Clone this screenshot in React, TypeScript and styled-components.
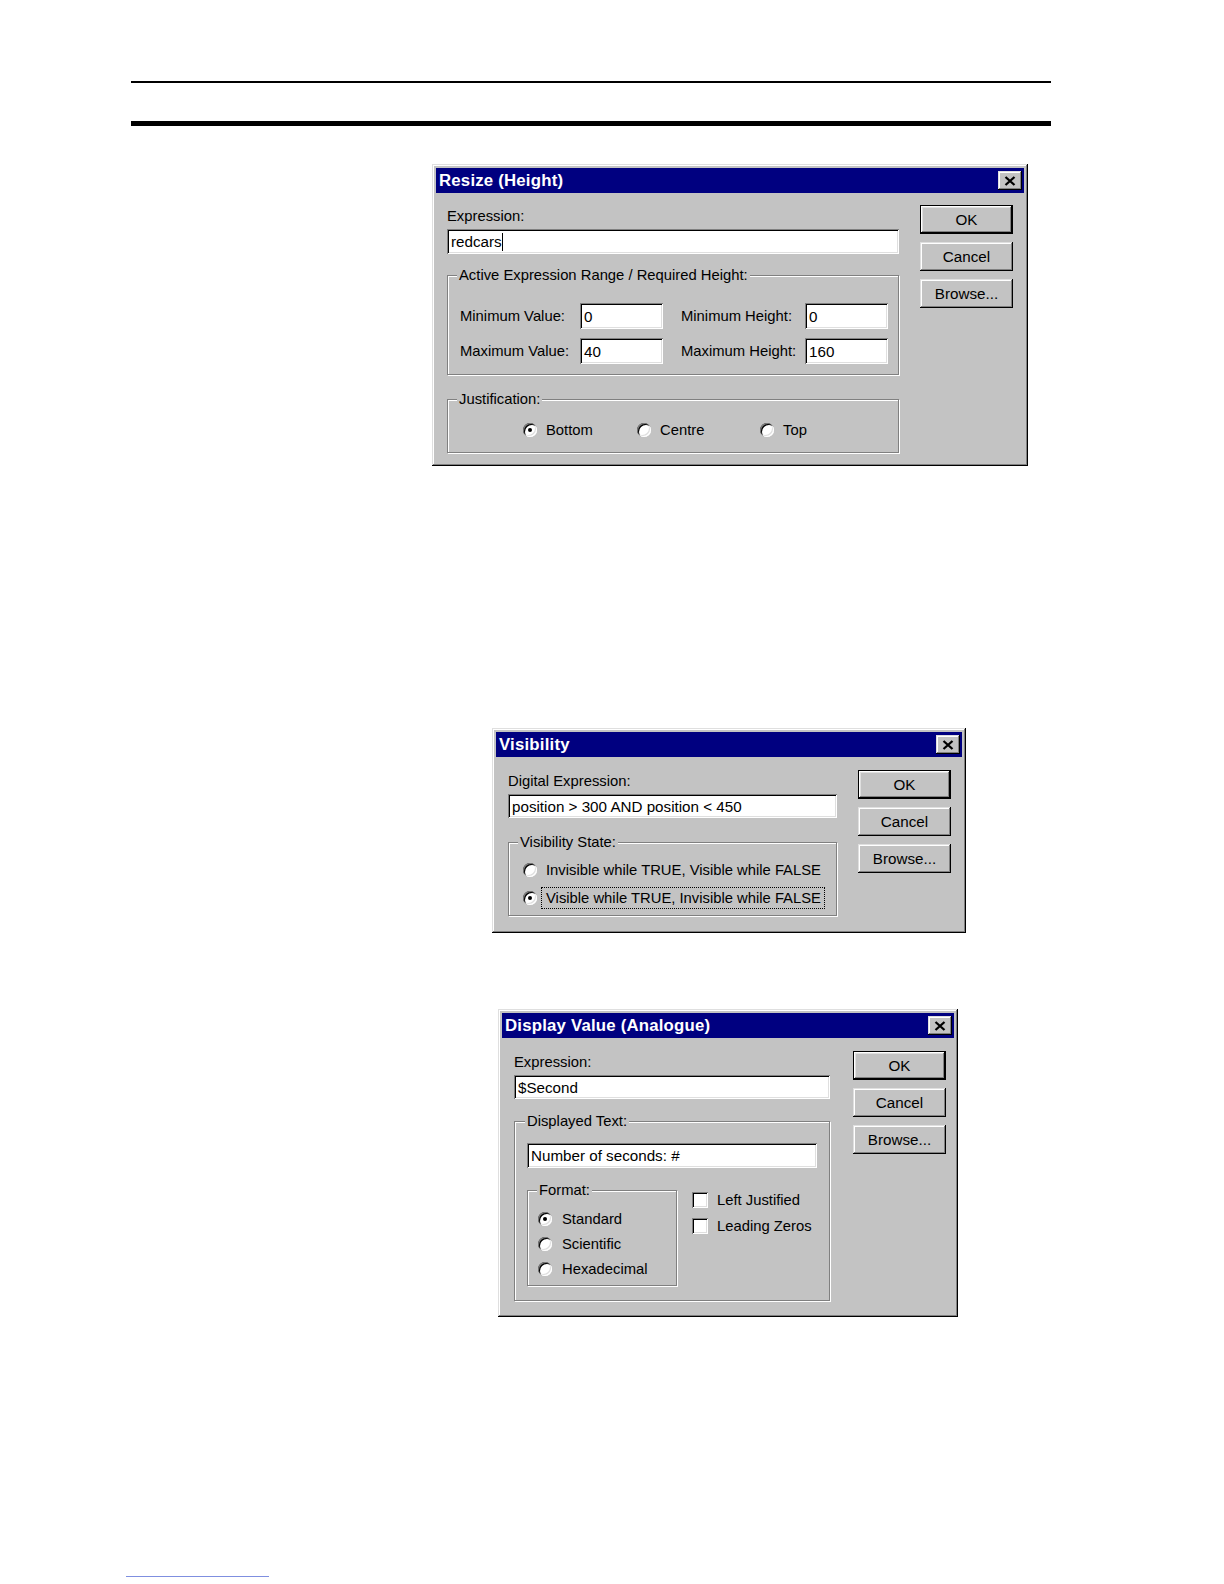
import React from 'react';
import styled, { createGlobalStyle, css } from 'styled-components';

const GlobalStyle = createGlobalStyle`
  html, body {
    margin: 0;
    padding: 0;
    background: #ffffff;
    overflow: hidden;
  }
  body {
    font-family: 'Liberation Sans', Arial, sans-serif;
    color: #000;
  }
`;

const raised = css`
  box-shadow: inset -1px -1px #000, inset 1px 1px #dfdfdf, inset -2px -2px #808080,
    inset 2px 2px #fff;
`;

const sunken = css`
  box-shadow: inset 1px 1px #808080, inset -1px -1px #fff, inset 2px 2px #000,
    inset -2px -2px #dfdfdf;
`;

const Page = styled.div`
  width: 100%;
  height: 1584px;
  padding-top: 81px;
  box-sizing: border-box;
  overflow: hidden;
`;

const Rule = styled.div<{ $height: number; $gap: number }>`
  width: 920px;
  height: ${({ $height }) => $height}px;
  margin: ${({ $gap }) => $gap}px 0 0 131px;
  background: #000;
`;

const FooterRule = styled.div`
  width: 143px;
  height: 1px;
  margin: 259px 0 0 126px;
  background: #7f8fe0;
`;

const Window = styled.div<{ $width: number; $left: number; $gap: number }>`
  width: ${({ $width }) => $width}px;
  margin: ${({ $gap }) => $gap}px 0 0 ${({ $left }) => $left}px;
  padding: 4px;
  box-sizing: border-box;
  background: #c3c3c3;
  ${raised};
  font-size: 14.8px;
`;

const TitleBar = styled.div`
  height: 25px;
  background: #000080;
  display: flex;
  align-items: center;
  justify-content: space-between;
  padding: 0 2px 0 3px;
`;

const Title = styled.span`
  color: #fff;
  font-weight: bold;
  font-size: 16.8px;
  letter-spacing: 0.2px;
`;

const CloseButton = styled.div`
  width: 24px;
  height: 19px;
  background: #c3c3c3;
  ${raised};
  display: flex;
  align-items: center;
  justify-content: center;
`;

const Body = styled.div<{ $pad: string; $gap: number }>`
  display: flex;
  align-items: flex-start;
  gap: ${({ $gap }) => $gap}px;
  padding: ${({ $pad }) => $pad};
`;

const MainColumn = styled.div<{ $width: number }>`
  width: ${({ $width }) => $width}px;
  display: flex;
  flex-direction: column;
`;

const ButtonColumn = styled.div`
  width: 93px;
  display: flex;
  flex-direction: column;
  gap: 8px;
`;

const Button = styled.div<{ $default?: boolean }>`
  height: 29px;
  display: flex;
  align-items: center;
  justify-content: center;
  font-size: 15.2px;
  ${raised};
  ${({ $default }) =>
    $default &&
    css`
      box-shadow: inset 0 0 0 1px #000, inset -2px -2px #000, inset 2px 2px #fff,
        inset -3px -3px #808080, inset 3px 3px #dfdfdf;
    `}
`;

const FieldLabel = styled.div`
  line-height: 22px;
  height: 22px;
  white-space: nowrap;
`;

const TextBox = styled.div<{ $height?: number; $flush?: boolean }>`
  height: ${({ $height }) => $height ?? 24}px;
  margin-top: ${({ $flush }) => ($flush ? 0 : 2)}px;
  background: #fff;
  ${sunken};
  display: flex;
  align-items: center;
  padding-left: 4px;
  white-space: nowrap;
  box-sizing: border-box;
  font-size: 15.2px;
`;

const Caret = styled.span`
  display: inline-block;
  width: 1px;
  height: 18px;
  background: #000;
`;

const Group = styled.fieldset<{ $gap: number; $pad: string; $legendShift: number; $width?: number }>`
  margin: ${({ $gap }) => $gap}px 0 0 0;
  padding: ${({ $pad }) => $pad};
  border: 1px solid #808080;
  box-shadow: inset 1px 1px #fff, 1px 1px #fff;
  min-inline-size: 0;
  ${({ $width }) => $width && `width: ${$width}px; box-sizing: border-box;`}
  & > legend {
    margin-left: ${({ $legendShift }) => $legendShift}px;
  }
`;

const Legend = styled.legend`
  padding: 0 2px;
  line-height: 20px;
  height: 20px;
  background: #c3c3c3;
  white-space: nowrap;
`;

const RangeGrid = styled.div`
  display: grid;
  grid-template-columns: 120px 83px 142px 83px;
  grid-auto-rows: 26px;
  row-gap: 9px;
  align-items: center;
`;

const GridLabel = styled.span<{ $indent?: number }>`
  padding-left: ${({ $indent }) => $indent ?? 0}px;
  white-space: nowrap;
`;

const RadioLine = styled.div`
  display: grid;
  grid-template-columns: 114px 123px auto;
  padding-left: 63px;
`;

const OptionList = styled.div<{ $gap: number }>`
  display: flex;
  flex-direction: column;
  gap: ${({ $gap }) => $gap}px;
`;

const Option = styled.div<{ $height?: number; $gap?: number }>`
  display: flex;
  align-items: center;
  gap: ${({ $gap }) => $gap ?? 9}px;
  height: ${({ $height }) => $height ?? 20}px;
  white-space: nowrap;
`;

const RadioMark = styled.span<{ $checked?: boolean }>`
  position: relative;
  flex: none;
  width: 14px;
  height: 14px;
  border-radius: 50%;
  background: #fff;
  box-shadow: inset 1px 1px #808080, inset -1px -1px #fff, inset 2px 2px #000,
    inset -2px -2px #dfdfdf;
  ${({ $checked }) =>
    $checked &&
    css`
      &::after {
        content: '';
        position: absolute;
        left: 5px;
        top: 5px;
        width: 4px;
        height: 4px;
        border-radius: 50%;
        background: #000;
      }
    `}
`;

const CheckMark = styled.span`
  flex: none;
  width: 16px;
  height: 16px;
  background: #fff;
  ${sunken};
`;

const Focus = styled.span`
  outline: 1px dotted #000;
  outline-offset: 0;
  padding: 2px 3px 2px 4px;
  margin-left: -4px;
`;

const SplitRow = styled.div`
  display: flex;
  align-items: flex-start;
  gap: 15px;
`;

const CheckColumn = styled.div`
  margin-top: 21px;
  display: flex;
  flex-direction: column;
  gap: 5px;
`;

const CloseGlyph = () => (
  <svg width="12" height="10" viewBox="0 0 12 10">
    <path d="M1.5 1 L10.5 9 M10.5 1 L1.5 9" stroke="#000" strokeWidth="2.3" />
  </svg>
);

type DialogProps = {
  title: string;
  width: number;
  left: number;
  gap: number;
  pad: string;
  columnGap: number;
  mainWidth: number;
  children: React.ReactNode;
};

const Dialog = ({ title, width, left, gap, pad, columnGap, mainWidth, children }: DialogProps) => (
  <Window $width={width} $left={left} $gap={gap}>
    <TitleBar>
      <Title>{title}</Title>
      <CloseButton>
        <CloseGlyph />
      </CloseButton>
    </TitleBar>
    <Body $pad={pad} $gap={columnGap}>
      <MainColumn $width={mainWidth}>{children}</MainColumn>
      <ButtonColumn>
        <Button $default>OK</Button>
        <Button>Cancel</Button>
        <Button>Browse...</Button>
      </ButtonColumn>
    </Body>
  </Window>
);

const App = () => (
  <>
    <GlobalStyle />
    <Page>
      <Rule $height={2} $gap={0} />
      <Rule $height={5} $gap={38} />

      <Dialog
        title="Resize (Height)"
        width={596}
        left={432}
        gap={38}
        pad="12px 11px 9px 11px"
        columnGap={21}
        mainWidth={452}
      >
        <FieldLabel>Expression:</FieldLabel>
        <TextBox $height={25}>
          redcars
          <Caret />
        </TextBox>
        <Group $gap={11} $pad="18px 11px 10px 12px" $legendShift={-3}>
          <Legend>Active Expression Range / Required Height:</Legend>
          <RangeGrid>
            <GridLabel>Minimum Value:</GridLabel>
            <TextBox $flush $height={26}>0</TextBox>
            <GridLabel $indent={18}>Minimum Height:</GridLabel>
            <TextBox $flush $height={26}>0</TextBox>
            <GridLabel>Maximum Value:</GridLabel>
            <TextBox $flush $height={26}>40</TextBox>
            <GridLabel $indent={18}>Maximum Height:</GridLabel>
            <TextBox $flush $height={26}>160</TextBox>
          </RangeGrid>
        </Group>
        <Group $gap={14} $pad="11px 11px 12px 12px" $legendShift={-3}>
          <Legend>Justification:</Legend>
          <RadioLine>
            <Option>
              <RadioMark $checked />
              Bottom
            </Option>
            <Option>
              <RadioMark />
              Centre
            </Option>
            <Option>
              <RadioMark />
              Top
            </Option>
          </RadioLine>
        </Group>
      </Dialog>

      <Dialog
        title="Visibility"
        width={474}
        left={492}
        gap={262}
        pad="13px 11px 13px 12px"
        columnGap={21}
        mainWidth={329}
      >
        <FieldLabel>Digital Expression:</FieldLabel>
        <TextBox>position &gt; 300 AND position &lt; 450</TextBox>
        <Group $gap={14} $pad="8px 8px 7px 14px" $legendShift={-5}>
          <Legend>Visibility State:</Legend>
          <OptionList $gap={8}>
            <Option>
              <RadioMark />
              Invisible while TRUE, Visible while FALSE
            </Option>
            <Option>
              <RadioMark $checked />
              <Focus>Visible while TRUE, Invisible while FALSE</Focus>
            </Option>
          </OptionList>
        </Group>
      </Dialog>

      <Dialog
        title="Display Value (Analogue)"
        width={460}
        left={498}
        gap={76}
        pad="13px 8px 12px 12px"
        columnGap={23}
        mainWidth={316}
      >
        <FieldLabel>Expression:</FieldLabel>
        <TextBox>$Second</TextBox>
        <Group $gap={12} $pad="12px 12px 14px 12px" $legendShift={-2}>
          <Legend>Displayed Text:</Legend>
          <TextBox $flush $height={25}>
            Number of seconds: #
          </TextBox>
          <SplitRow>
            <Group $gap={12} $pad="9px 8px 6px 10px" $legendShift={-1} $width={150}>
              <Legend>Format:</Legend>
              <OptionList $gap={5}>
                <Option $gap={10}>
                  <RadioMark $checked />
                  Standard
                </Option>
                <Option $gap={10}>
                  <RadioMark />
                  Scientific
                </Option>
                <Option $gap={10}>
                  <RadioMark />
                  Hexadecimal
                </Option>
              </OptionList>
            </Group>
            <CheckColumn>
              <Option $height={21}>
                <CheckMark />
                Left Justified
              </Option>
              <Option $height={21}>
                <CheckMark />
                Leading Zeros
              </Option>
            </CheckColumn>
          </SplitRow>
        </Group>
      </Dialog>

      <FooterRule />
    </Page>
  </>
);

export default App;
